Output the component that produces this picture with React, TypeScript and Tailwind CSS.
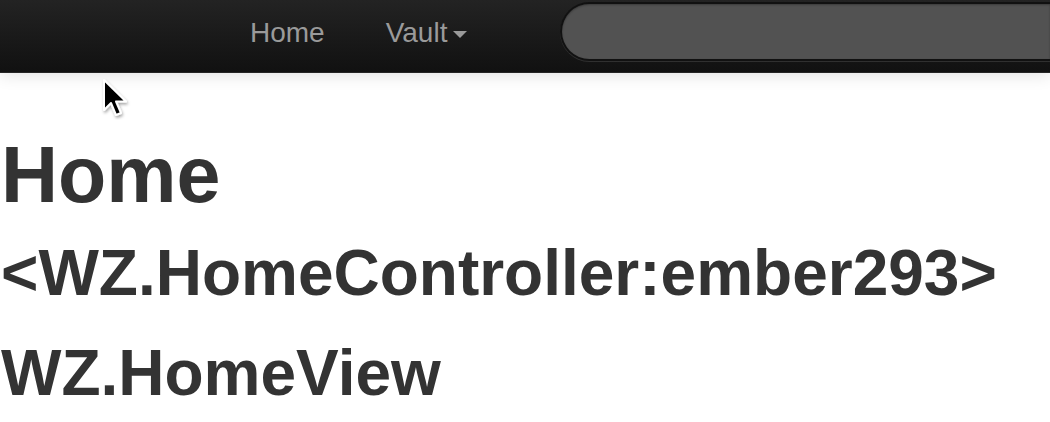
export default function App() {
  return (
    <div className="relative min-h-[422px] overflow-hidden bg-white font-['Liberation_Sans',Arial,sans-serif]">
      <nav className="relative h-[73px] border-b border-[#262626] bg-gradient-to-b from-[#232323] to-[#111111] shadow-[0_2px_16px_rgba(0,0,0,0.12)]">
        <div className="flex h-full items-center pl-[250px]">
          <a className="-translate-y-[3px] text-[28px] leading-none text-[#9a9a9a]">Home</a>
          <a className="ml-[61px] flex -translate-y-[3px] items-center text-[28px] leading-none text-[#9a9a9a]">
            Vault
            <span className="ml-[6px] mt-[2px] h-0 w-0 border-x-[7px] border-t-[7px] border-x-transparent border-t-[#9a9a9a]" />
          </a>
          <div className="ml-[93px] h-[59px] flex-1 -translate-y-[5px] rounded-l-[30px] border-2 border-r-0 border-[#111] bg-[#525252] shadow-[0_1px_0_rgba(255,255,255,0.12),inset_0_1px_2px_rgba(0,0,0,0.3)]" />
        </div>
      </nav>

      <div className="pl-[1px] text-[#333]">
        <h1 className="mt-[62px] text-[79px] font-bold leading-none">Home</h1>
        <h2 className="mt-[27px] text-[64px] font-bold leading-none">&lt;WZ.HomeController:ember293&gt;</h2>
        <h3 className="mt-[36px] text-[64px] font-bold leading-none">WZ.HomeView</h3>
      </div>

      {/* mouse pointer captured in the screenshot */}
      <svg className="absolute left-[101px] top-[78px]" width="30" height="42" viewBox="0 0 30 42">
        <defs>
          <filter id="cs" x="-50%" y="-50%" width="200%" height="200%">
            <feDropShadow dx="1" dy="2" stdDeviation="1.5" floodOpacity="0.35" />
          </filter>
        </defs>
        <path
          d="M3 2 L3 32 L10 25 L15 37 L20 35 L15 23.5 L25 23.5 Z"
          fill="#000"
          stroke="#fff"
          strokeWidth="2"
          strokeLinejoin="round"
          filter="url(#cs)"
        />
      </svg>
    </div>
  );
}
